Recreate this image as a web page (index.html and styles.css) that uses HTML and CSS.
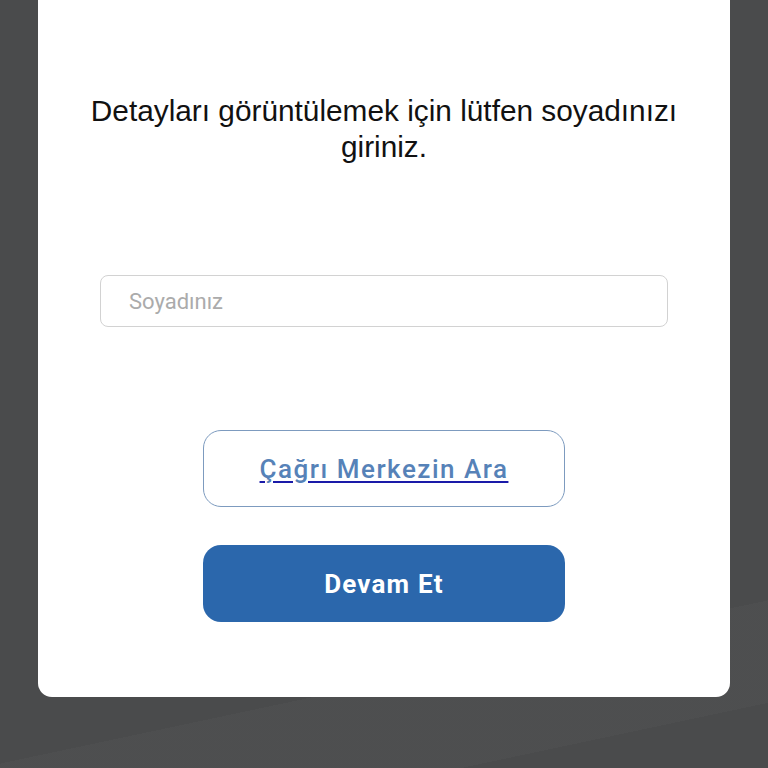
FILE: index.html
```html
<!DOCTYPE html>
<html lang="tr">
<head>
<meta charset="utf-8">
<title>Soyadı Doğrulama</title>
<link rel="stylesheet" href="styles.css">
</head>
<body>
<main class="card">
  <p class="intro">Detayları görüntülemek için lütfen soyadınızı giriniz.</p>
  <div class="field">
    <input class="surname" type="text" placeholder="Soyadınız">
  </div>
  <div class="actions">
    <a class="btn btn-outline" href="#"><span class="link">Çağrı Merkezin Ara</span></a>
    <button class="btn btn-primary" type="button">Devam Et</button>
  </div>
</main>
</body>
</html>
```
FILE: styles.css
```css
html, body {
  margin: 0;
  padding: 0;
}
body {
  width: 768px;
  height: 768px;
  overflow: hidden;
  background-color: #4a4b4c;
  background-image:
    linear-gradient(168deg, transparent 0, transparent 82%, rgba(255,255,255,0.018) 82%, rgba(255,255,255,0.018) 93%, transparent 93%);
  font-family: "Liberation Sans", Arial, sans-serif;
}
.card {
  box-sizing: border-box;
  width: 692px;
  height: 697px;
  margin-left: 38px;
  background: #ffffff;
  border-radius: 0 0 14px 14px;
  padding: 93px 0 0;
  display: flex;
  flex-direction: column;
  align-items: center;
}
.intro {
  margin: 0;
  width: 620px;
  text-align: center;
  font-size: 29.8px;
  line-height: 36px;
  color: #111111;
}
.field {
  margin-top: 110px;
  width: 568px;
}
.surname {
  box-sizing: border-box;
  width: 100%;
  height: 52px;
  border: 1.5px solid #d2d2d2;
  border-radius: 8px;
  padding: 0 28px;
  font-family: Roboto, "Liberation Sans", sans-serif;
  font-size: 22px;
  color: #222;
  outline: none;
  background: #fff;
}
.surname::placeholder {
  color: #ababab;
}
.actions {
  margin-top: 103px;
  display: flex;
  flex-direction: column;
  gap: 38px;
}
.btn {
  box-sizing: border-box;
  width: 362px;
  height: 77px;
  border-radius: 18px;
  display: flex;
  align-items: center;
  justify-content: center;
  font-family: Roboto, "Liberation Sans", sans-serif;
  font-size: 26px;
  letter-spacing: 1.2px;
  cursor: pointer;
}
.btn-outline {
  border: 1.5px solid #7d9bbf;
  background: #fff;
  text-decoration: none;
  letter-spacing: 1.5px;
}
.link {
  color: #5682b8;
  font-weight: 500;
  text-decoration: underline;
  text-decoration-color: #1a1aa8;
  text-decoration-thickness: 2px;
  text-underline-offset: 3px;
}
.btn-primary {
  border: none;
  background: #2b67ac;
  color: #ffffff;
  font-weight: 700;
}
```
